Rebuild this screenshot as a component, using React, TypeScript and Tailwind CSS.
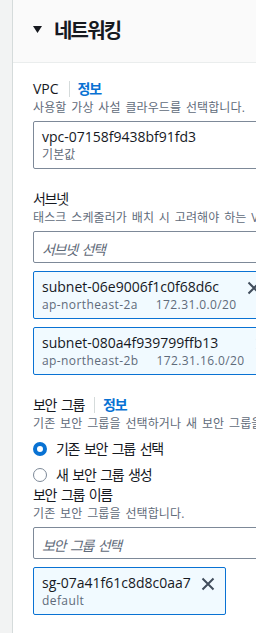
import React from 'react';

const ko14 = 'tracking-[-1.3px] [word-spacing:2.4px]';
const ko12 = 'tracking-[0.1px] [word-spacing:1.6px]';

function Label({ text, latin, info }: { text: string; latin?: boolean; info?: boolean }) {
  return (
    <div className="flex h-[20px] items-center text-[14px] leading-[20px] text-[#16191f]">
      <span className={latin ? '' : ko14}>{text}</span>
      {info && (
        <>
          <span className="ml-[10px] mr-[8px] h-[16px] w-px bg-[#d5dbdb]" />
          <span className={`font-bold text-[#0972d3] ${ko14}`}>정보</span>
        </>
      )}
    </div>
  );
}

function Desc({ text }: { text: string }) {
  return (
    <p className={`whitespace-nowrap text-[12px] leading-[18px] text-[#5f6b7a] ${ko12}`}>{text}</p>
  );
}

function Placeholder({ text }: { text: string }) {
  return (
    <div className="mt-[4px] h-[32px] rounded-[2px] border border-[#7d8998] px-[8px] py-[5px]">
      <span className={`text-[14px] italic leading-[20px] text-[#5f6b7a] ${ko14}`}>{text}</span>
    </div>
  );
}

function CloseIcon() {
  return (
    <svg width="14" height="14" viewBox="0 0 14 14" className="shrink-0">
      <path d="M1.5 1.5l11 11M12.5 1.5l-11 11" stroke="#414d5c" strokeWidth="2" fill="none" />
    </svg>
  );
}

function Token({ id, tags }: { id: string; tags: string[] }) {
  return (
    <div className="inline-flex self-start rounded-[2px] border border-[#0972d3] bg-[#f1faff] pb-[5px] pl-[8px] pr-[10px] pt-[5px]">
      <div className="flex flex-col">
        <span className="whitespace-nowrap text-[14px] leading-[20px] text-[#16191f]">{id}</span>
        <div className="flex gap-[18px] whitespace-nowrap text-[12px] leading-[16px] tracking-[0.4px] text-[#5f6b7a]">
          {tags.map((t) => (
            <span key={t}>{t}</span>
          ))}
        </div>
      </div>
      <div className="ml-[10px] mt-[4px]">
        <CloseIcon />
      </div>
    </div>
  );
}

function Radio({ label, checked }: { label: string; checked?: boolean }) {
  return (
    <div className="flex h-[20px] items-center gap-[9px]">
      <span
        className={
          checked
            ? 'h-[14px] w-[14px] shrink-0 rounded-full border-[4px] border-[#0972d3] bg-white'
            : 'h-[14px] w-[14px] shrink-0 rounded-full border-[1.5px] border-[#7d8998] bg-white'
        }
      />
      <span className={`text-[14px] leading-[20px] text-[#16191f] ${ko14}`}>{label}</span>
    </div>
  );
}

export default function App() {
  return (
    <div className="flex h-[633px] w-[256px] overflow-hidden bg-white font-['Open_Sans','Noto_Sans_CJK_KR',sans-serif] text-[#16191f]">
      <div className="w-[13px] shrink-0 border-r border-[#d5dbdb] bg-[#f2f3f3]" />
      <div className="flex w-[420px] shrink-0 flex-col">
        <div className="flex h-[63px] items-center gap-[12px] border-b border-[#eaeded] bg-[#fafafa] pl-[20px]">
          <svg width="9" height="7" viewBox="0 0 9 7" className="mt-[-3px]">
            <path d="M0 0h9L4.5 7z" fill="#16191f" />
          </svg>
          <h2 className="text-[20px] font-bold leading-[24px] tracking-[-1.8px] text-[#16191f]">네트워킹</h2>
        </div>

        <div className="flex flex-col px-[20px] pt-[16px]">
          <Label text="VPC" latin info />
          <Desc text="사용할 가상 사설 클라우드를 선택합니다." />
          <div className="mt-[4px] rounded-[2px] border border-[#7d8998] px-[8px] py-[5px]">
            <div className="text-[14px] leading-[20px] text-[#16191f]">vpc-07158f9438bf91fd3</div>
            <div className={`text-[12px] leading-[16px] text-[#5f6b7a] ${ko12}`}>기본값</div>
          </div>

          <div className="mt-[20px]">
            <Label text="서브넷" />
          </div>
          <Desc text="태스크 스케줄러가 배치 시 고려해야 하는 VPC의 서브넷을 선택합니다." />
          <Placeholder text="서브넷 선택" />
          <div className="mt-[8px] flex flex-col gap-[8px]">
            <Token id="subnet-06e9006f1c0f68d6c" tags={['ap-northeast-2a', '172.31.0.0/20']} />
            <Token id="subnet-080a4f939799ffb13" tags={['ap-northeast-2b', '172.31.16.0/20']} />
          </div>

          <div className="mt-[20px]">
            <Label text="보안 그룹" info />
          </div>
          <Desc text="기존 보안 그룹을 선택하거나 새 보안 그룹을 생성합니다." />
          <div className="mt-[6px] flex flex-col gap-[6px]">
            <Radio label="기존 보안 그룹 선택" checked />
            <Radio label="새 보안 그룹 생성" />
          </div>
          <Label text="보안 그룹 이름" />
          <Desc text="기존 보안 그룹을 선택합니다." />
          <Placeholder text="보안 그룹 선택" />
          <div className="mt-[8px] flex">
            <Token id="sg-07a41f61c8d8c0aa7" tags={['default']} />
          </div>
        </div>
      </div>
    </div>
  );
}
